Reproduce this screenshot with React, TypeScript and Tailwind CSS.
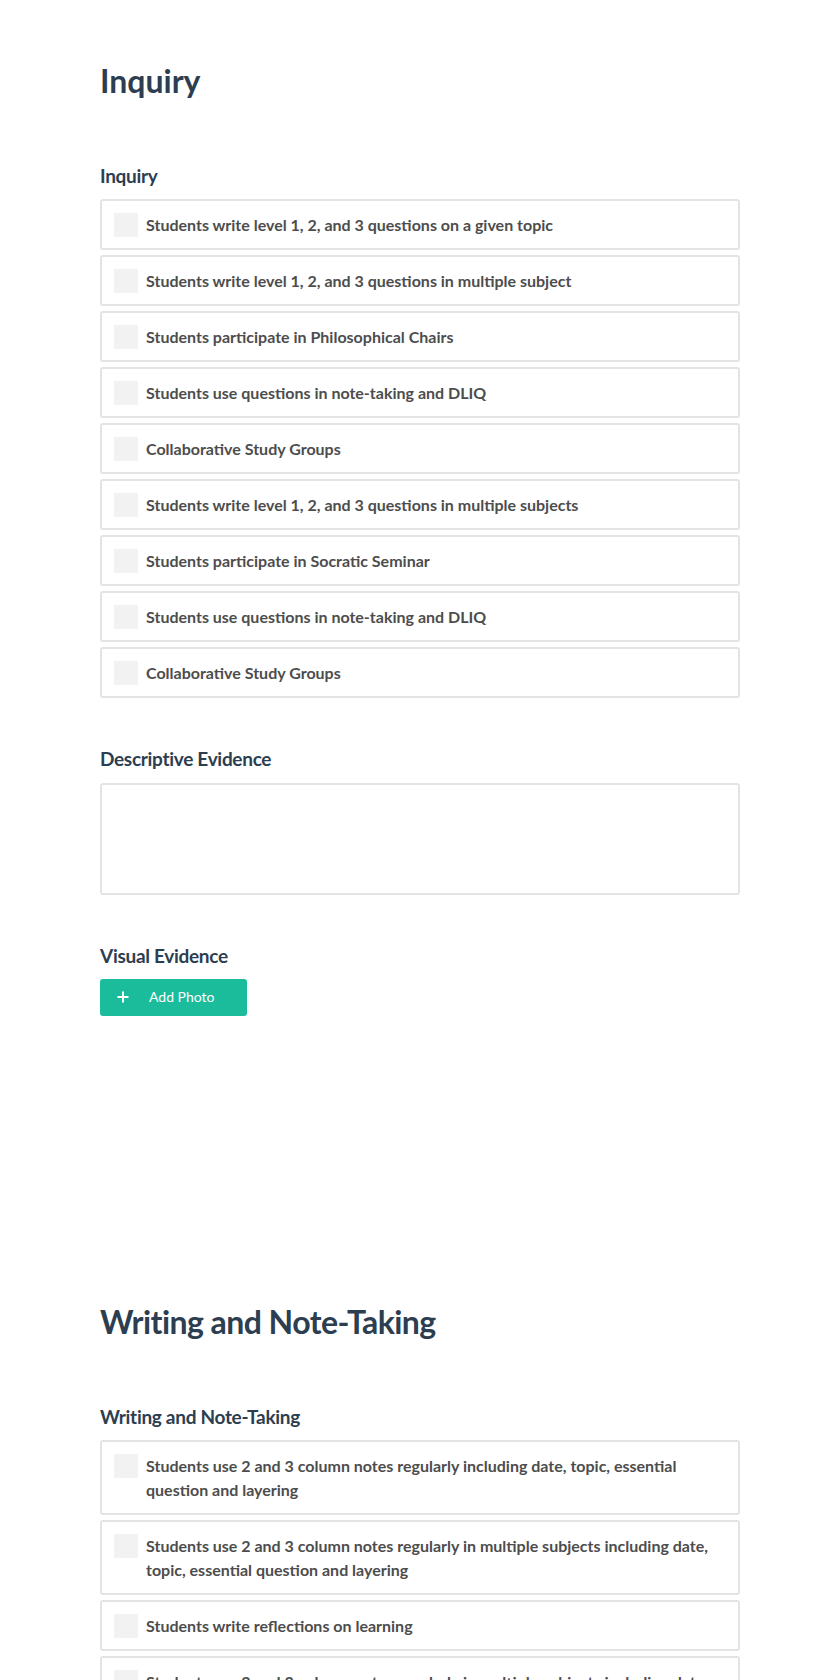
import React from "react";

type Section = {
  title: string;
  heading: string;
  items: string[];
};

const sections: Section[] = [
  {
    title: "Inquiry",
    heading: "Inquiry",
    items: [
      "Students write level 1, 2, and 3 questions on a given topic",
      "Students write level 1, 2, and 3 questions in multiple subject",
      "Students participate in Philosophical Chairs",
      "Students use questions in note-taking and DLIQ",
      "Collaborative Study Groups",
      "Students write level 1, 2, and 3 questions in multiple subjects",
      "Students participate in Socratic Seminar",
      "Students use questions in note-taking and DLIQ",
      "Collaborative Study Groups",
    ],
  },
  {
    title: "Writing and Note-Taking",
    heading: "Writing and Note-Taking",
    items: [
      "Students use 2 and 3 column notes regularly including date, topic, essential question and layering",
      "Students use 2 and 3 column notes regularly in multiple subjects including date, topic, essential question and layering",
      "Students write reflections on learning",
      "Students use 2 and 3 column notes regularly in multiple subjects including date, topic, essential question and layering",
      "Students write reflections on learning",
    ],
  },
];

const CheckItem: React.FC<{ label: string }> = ({ label }) => (
  <label className="flex items-start gap-2 rounded-[3px] border-2 border-[#e4e4e4] bg-white px-3 pt-3 pb-[11px]">
    <span className="h-6 w-6 shrink-0 bg-[#f2f2f2]" />
    <span className="text-[16px] leading-6 font-bold text-[#4d4d4d]">{label}</span>
  </label>
);

const Heading: React.FC<{ children: React.ReactNode; className?: string }> = ({ children, className }) => (
  <h2 className={`text-[19px] leading-[1.2] font-bold tracking-[-0.3px] text-[#2c3e50] ${className ?? ""}`}>
    {children}
  </h2>
);

// long titles render a touch tighter in the original, short ones don't
const Title: React.FC<{ children: React.ReactNode; tight?: boolean; className?: string }> = ({
  children,
  tight,
  className,
}) => (
  <h1
    className={`text-[32px] leading-[1.2] font-bold text-[#2c3e50] ${tight ? "tracking-[-0.55px]" : "tracking-normal"} ${
      className ?? ""
    }`}
  >
    {children}
  </h1>
);

const App: React.FC = () => {
  const [first, second] = sections;

  return (
    <div className="min-h-screen bg-white font-['Lato',sans-serif]">
      <div className="mx-auto w-[640px] pt-[62px]">
        {/* Inquiry */}
        <Title>{first.title}</Title>
        <Heading className="mt-[65px] mb-[11px]">{first.heading}</Heading>
        <div className="flex flex-col gap-[5px]">
          {first.items.map((item, i) => (
            <CheckItem key={i} label={item} />
          ))}
        </div>

        <Heading className="mt-[50px] mb-[12px]">Descriptive Evidence</Heading>
        <textarea className="block h-[112px] w-full resize-none rounded-[3px] border-2 border-[#e4e4e4] bg-white outline-none" />

        <Heading className="mt-[50px] mb-[11px]">Visual Evidence</Heading>
        <button className="flex h-[37px] w-[147px] items-center rounded-[3px] bg-[#1abc9c] pl-[17px] text-white">
          <svg width="12" height="12" viewBox="0 0 12 12" className="shrink-0">
            <path d="M6 0.5v11M0.5 6h11" stroke="white" strokeWidth="2" />
          </svg>
          <span className="ml-[20px] text-[14px] leading-none">Add Photo</span>
        </button>

        {/* Writing and Note-Taking */}
        <Title tight className="mt-[287px]">
          {second.title}
        </Title>
        <Heading className="mt-[65px] mb-[11px]">{second.heading}</Heading>
        <div className="flex flex-col gap-[5px] pb-10">
          {second.items.map((item, i) => (
            <CheckItem key={i} label={item} />
          ))}
        </div>
      </div>
    </div>
  );
};

export default App;
